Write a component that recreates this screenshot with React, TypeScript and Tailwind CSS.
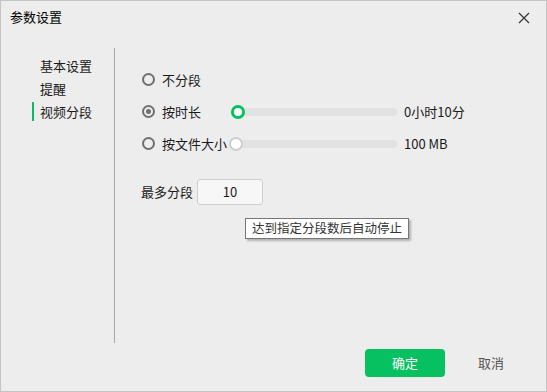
import React from 'react';

const font = { fontFamily: '"Microsoft YaHei", "Noto Sans CJK SC", "Liberation Sans", sans-serif' };

const Radio: React.FC<{ checked?: boolean }> = ({ checked }) => (
    <span className="w-[13px] h-[13px] rounded-full border-2 border-[#707070] flex items-center justify-center shrink-0">
        {checked && <span className="w-[5px] h-[5px] rounded-full bg-[#707070]" />}
    </span>
);

const Slider: React.FC<{ active?: boolean }> = ({ active }) => (
    <div className="relative w-[167px] h-[8px] rounded-full bg-[#e2e2e2]">
        <span
            className={`absolute top-1/2 -translate-y-1/2 w-[14px] h-[14px] rounded-full bg-white ${active ? 'left-[1px] border-[3px] border-[#07c160]' : '-left-[1px] border-2 border-[#cfcfcf]'}`}
        />
    </div>
);

export default function App() {
    return (
        <div className="w-[547px] h-[392px] bg-[#ededed] border border-[#c4c4c4] flex flex-col text-[13px] text-[#1a1a1a]" style={font}>
            {/* Title bar */}
            <div className="h-[32px] flex items-center justify-between pl-[9px] pr-[16px]">
                <span className="text-[13px] text-black">参数设置</span>
                <svg width="12" height="12" viewBox="0 0 12 12" className="mt-[1px]">
                    <path d="M1 1 L11 11 M11 1 L1 11" stroke="#333" strokeWidth="1.2" />
                </svg>
            </div>

            <div className="flex flex-1">
                {/* Sidebar */}
                <div className="w-[114px] h-[295px] self-start pt-[8px] pl-[31px] border-r border-[#a8a8a8] mt-[15px] flex flex-col gap-[4px]">
                    <div className="pl-[8px] h-[19px] flex items-center">基本设置</div>
                    <div className="pl-[8px] h-[19px] flex items-center">提醒</div>
                    <div className="h-[19px] flex items-center border-l-2 border-[#07c160] pl-[6px]">视频分段</div>
                </div>

                {/* Content */}
                <div className="flex-1 flex flex-col">
                    <div className="flex flex-col pl-[27px] pt-[37px] gap-[13px]">
                        <div className="flex items-center h-[19px] gap-[7px]">
                            <Radio />
                            <span>不分段</span>
                        </div>
                        <div className="flex items-center h-[19px]">
                            <Radio checked />
                            <span className="ml-[7px] w-[68px]">按时长</span>
                            <Slider active />
                            <span className="ml-[7px]">0小时10分</span>
                        </div>
                        <div className="flex items-center h-[19px]">
                            <Radio />
                            <span className="ml-[7px] w-[68px]">按文件大小</span>
                            <Slider />
                            <span className="ml-[7px]">100 MB</span>
                        </div>
                    </div>

                    <div className="flex items-center pl-[26px] mt-[26px] gap-[4px]">
                        <span>最多分段</span>
                        <div className="w-[66px] h-[26px] rounded-[3px] border border-[#cfcfcf] bg-[#f7f7f7] flex items-center justify-center">10</div>
                    </div>

                    <div className="ml-[130px] mt-[13px] self-start border border-[#767676] bg-white px-[6px] h-[21px] flex items-center text-[12.5px] text-[#333] shadow-[2px_2px_2px_rgba(0,0,0,0.25)]">
                        达到指定分段数后自动停止
                    </div>

                    <div className="mt-auto mb-[14px] flex items-center pl-[250px] gap-[32px]">
                        <button className="w-[80px] h-[28px] rounded-[4px] bg-[#07c160] text-white">确定</button>
                        <button className="text-[#555] w-[28px]">取消</button>
                    </div>
                </div>
            </div>
        </div>
    );
}
